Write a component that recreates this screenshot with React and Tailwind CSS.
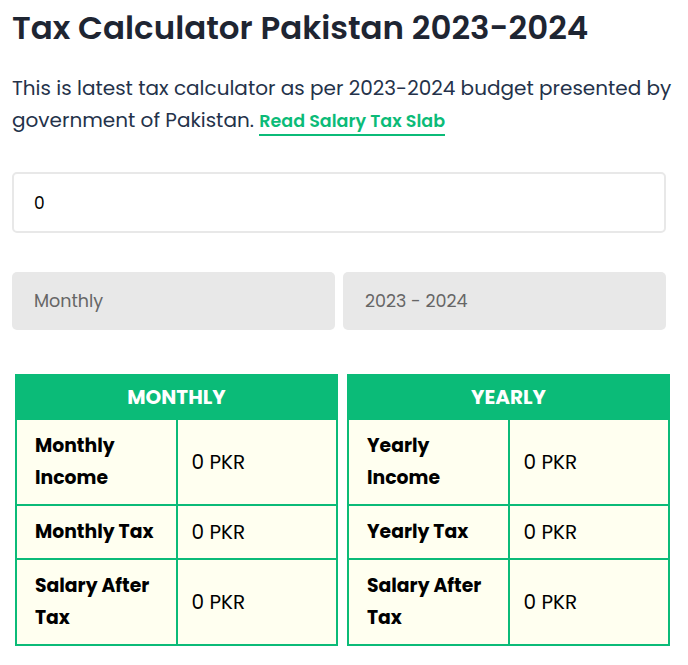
import { useState } from "react";

const font = { fontFamily: "Poppins, Inter, 'Noto Sans', sans-serif" };

function ResultTable({ title, rows }) {
  return (
    <table className="w-full border-collapse border-2 border-[#0bbb78] text-black">
      <thead>
        <tr>
          <th
            colSpan={2}
            className="h-[44px] rounded-t-[3px] bg-[#0bbb78] text-center text-[20px] font-bold text-white"
          >
            {title}
          </th>
        </tr>
      </thead>
      <tbody>
        {rows.map((r) => (
          <tr key={r.label}>
            <td className="w-1/2 border-2 border-[#0bbb78] bg-[#fffff0] px-[18px] py-[10px] text-[18.8px] font-bold leading-[32px]">
              {r.label}
            </td>
            <td className="w-1/2 border-2 border-[#0bbb78] bg-[#fffff0] px-[14px] py-[10px] text-[20px] leading-[32px]">
              {r.value}
            </td>
          </tr>
        ))}
      </tbody>
    </table>
  );
}

export default function App() {
  const [salary, setSalary] = useState("0");

  const monthly = [
    { label: "Monthly Income", value: "0 PKR" },
    { label: "Monthly Tax", value: "0 PKR" },
    { label: "Salary After Tax", value: "0 PKR" },
  ];
  const yearly = [
    { label: "Yearly Income", value: "0 PKR" },
    { label: "Yearly Tax", value: "0 PKR" },
    { label: "Salary After Tax", value: "0 PKR" },
  ];

  return (
    <div style={font} className="min-h-screen bg-white px-3 pt-[6px] text-[#1d2634]">
      <h1 className="text-[32.5px] font-semibold leading-[44px] text-[#1e2532]">
        Tax Calculator Pakistan 2023-2024
      </h1>

      <p className="mt-[22px] text-[20px] leading-[32px] text-[#24324a]">
        This is latest tax calculator as per 2023-2024 budget presented by government of Pakistan.{" "}
        <a
          href="#"
          className="inline-block border-b-2 border-[#0bbb78] text-[17.5px] font-semibold leading-[25px] text-[#0bbb78]"
        >
          Read Salary Tax Slab
        </a>
      </p>

      <input
        value={salary}
        onChange={(e) => setSalary(e.target.value)}
        className="mt-[36px] block h-[61px] w-[654px] rounded-[5px] border-2 border-[#e8e8e8] bg-white px-5 text-[17px] text-black outline-none"
      />

      <div className="mt-[39px] flex w-[654px] gap-2">
        <div className="flex h-[58px] flex-1 items-center rounded-[5px] bg-[#e8e8e8] px-[22px] text-[17.5px] text-[#666]">
          Monthly
        </div>
        <div className="flex h-[58px] flex-1 items-center rounded-[5px] bg-[#e8e8e8] px-[22px] text-[17.5px] text-[#666]">
          2023 - 2024
        </div>
      </div>

      <div className="ml-[3px] mt-[44px] flex w-[655px] gap-[9px]">
        <ResultTable title="MONTHLY" rows={monthly} />
        <ResultTable title="YEARLY" rows={yearly} />
      </div>
    </div>
  );
}
